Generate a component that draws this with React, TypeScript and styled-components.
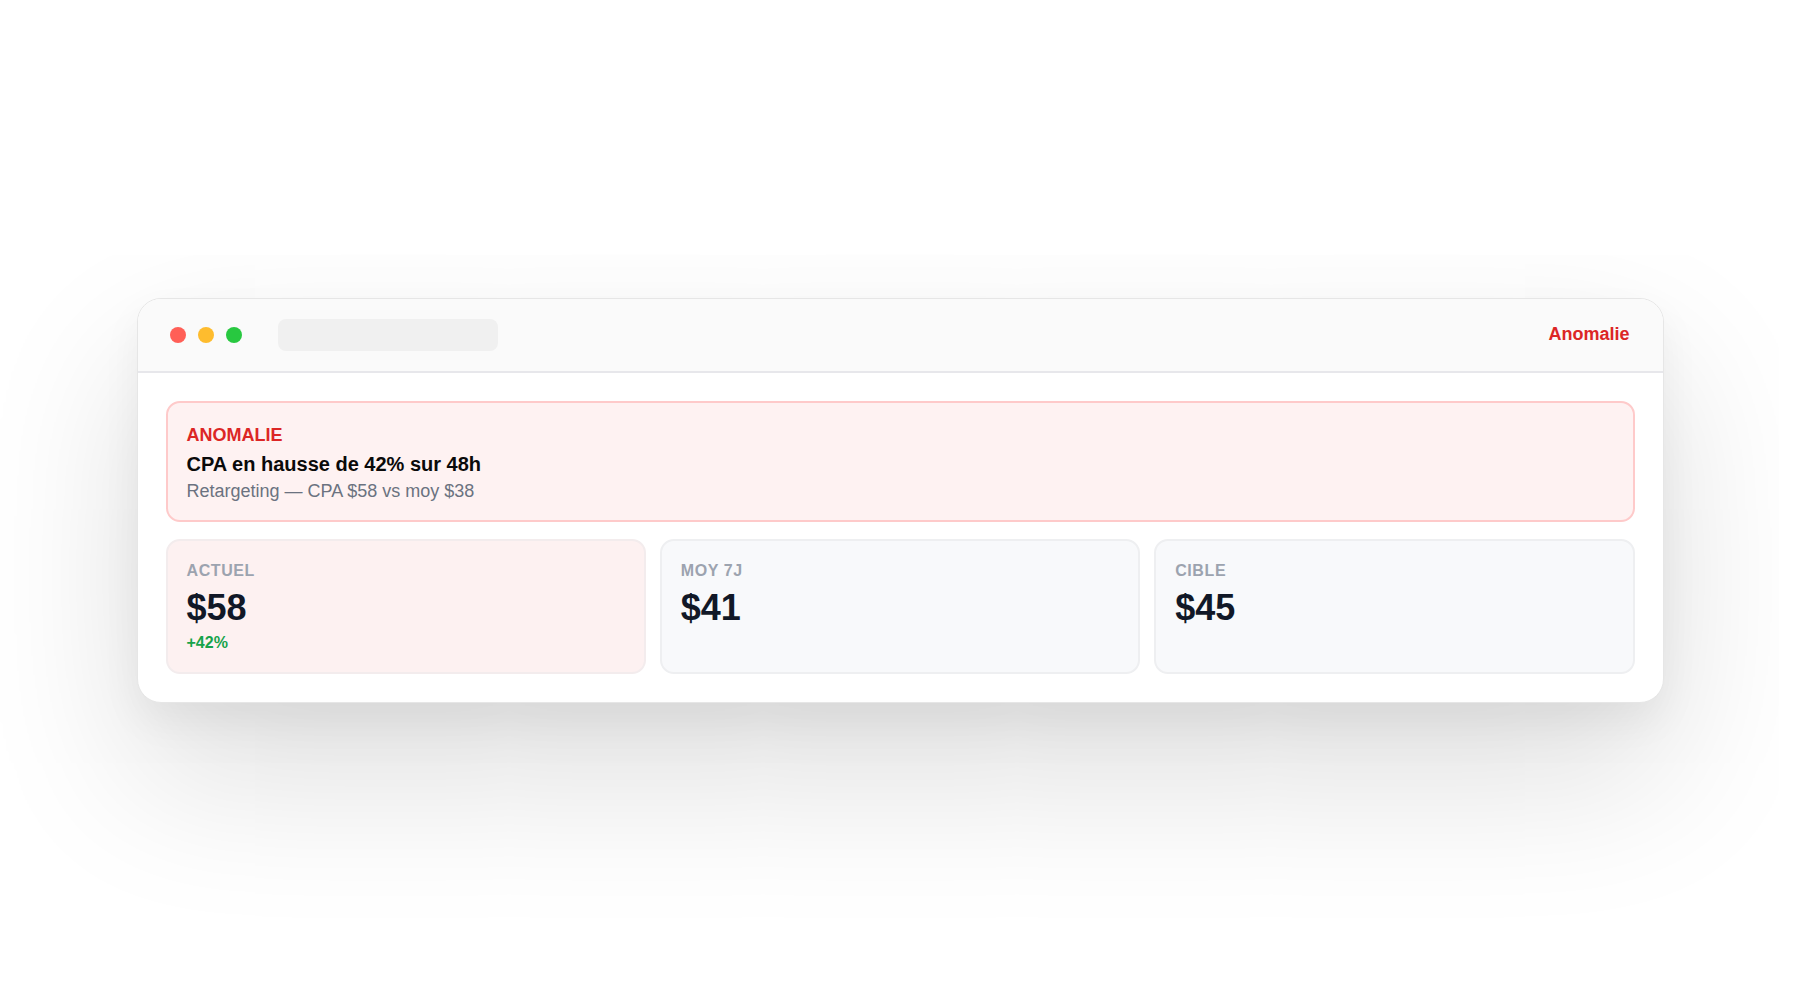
import styled, { createGlobalStyle } from "styled-components";

const GlobalStyle = createGlobalStyle`
    * {
        box-sizing: border-box;
    }
    html, body {
        margin: 0;
        padding: 0;
        background: #ffffff;
    }
    body {
        font-family: "Liberation Sans", Arial, Helvetica, sans-serif;
        -webkit-font-smoothing: antialiased;
    }
`;

const Page = styled.div`
    width: 100%;
    min-height: 100vh;
    display: flex;
    align-items: center;
    justify-content: center;
    background: #ffffff;
`;

const Window = styled.div`
    width: 1527px;
    background: #ffffff;
    border: 1px solid #e6e6e6;
    border-radius: 24px;
    overflow: hidden;
    box-shadow: 0 70px 160px rgba(0, 0, 0, 0.14), 0 18px 40px rgba(0, 0, 0, 0.05);
`;

// Title bar with traffic lights and fake address field
const TitleBar = styled.div`
    height: 74px;
    display: flex;
    align-items: center;
    padding: 0 33px 0 32px;
    background: #fafafa;
    border-bottom: 2px solid #e7e7eb;
`;

const Lights = styled.div`
    display: flex;
    gap: 12px;
`;

const Light = styled.span<{ $color: string }>`
    width: 16px;
    height: 16px;
    border-radius: 50%;
    background: ${(p) => p.$color};
`;

const AddressBar = styled.div`
    width: 220px;
    height: 32px;
    margin-left: 36px;
    border-radius: 8px;
    background: #f0f0f0;
`;

const Status = styled.span`
    margin-left: auto;
    font-size: 18px;
    font-weight: 700;
    color: #dc2626;
`;

const Body = styled.div`
    display: flex;
    flex-direction: column;
    gap: 17px;
    padding: 28px;
`;

const Alert = styled.div`
    display: flex;
    flex-direction: column;
    padding: 20px 19px 18px;
    background: #fef2f2;
    border: 2px solid #fecaca;
    border-radius: 14px;
`;

const AlertLabel = styled.div`
    font-size: 18px;
    line-height: 24px;
    font-weight: 700;
    color: #dc2626;
`;

const AlertTitle = styled.div`
    margin-top: 5px;
    font-size: 20px;
    line-height: 24px;
    font-weight: 700;
    color: #0a0a0a;
`;

const AlertText = styled.div`
    margin-top: 4px;
    font-size: 18px;
    line-height: 22px;
    color: #6b7280;
`;

const Metrics = styled.div`
    display: grid;
    grid-template-columns: repeat(3, 1fr);
    gap: 14px;
`;

const MetricCard = styled.div<{ $alert?: boolean }>`
    display: flex;
    flex-direction: column;
    padding: 20px 19px 19px;
    border-radius: 14px;
    border: 2px solid ${(p) => (p.$alert ? "#f3eced" : "#eeeff1")};
    background: ${(p) => (p.$alert ? "#fdf1f1" : "#f8f9fb")};
`;

const MetricLabel = styled.div`
    font-size: 16px;
    line-height: 20px;
    font-weight: 700;
    letter-spacing: 0.6px;
    color: #9ca3af;
`;

const MetricValue = styled.div`
    margin-top: 5px;
    font-size: 36px;
    line-height: 44px;
    font-weight: 700;
    color: #111827;
`;

const MetricDelta = styled.div`
    margin-top: 3px;
    font-size: 16px;
    line-height: 20px;
    font-weight: 700;
    color: #16a34a;
`;

const metrics = [
    { label: "ACTUEL", value: "$58", delta: "+42%", alert: true },
    { label: "MOY 7J", value: "$41" },
    { label: "CIBLE", value: "$45" },
];

export default function App() {
    return (
        <>
            <GlobalStyle />
            <Page>
                <Window>
                    <TitleBar>
                        <Lights>
                            <Light $color="#ff5f57" />
                            <Light $color="#febc2e" />
                            <Light $color="#28c840" />
                        </Lights>
                        <AddressBar />
                        <Status>Anomalie</Status>
                    </TitleBar>

                    <Body>
                        <Alert>
                            <AlertLabel>ANOMALIE</AlertLabel>
                            <AlertTitle>CPA en hausse de 42% sur 48h</AlertTitle>
                            <AlertText>Retargeting — CPA $58 vs moy $38</AlertText>
                        </Alert>

                        <Metrics>
                            {metrics.map((m) => (
                                <MetricCard key={m.label} $alert={m.alert}>
                                    <MetricLabel>{m.label}</MetricLabel>
                                    <MetricValue>{m.value}</MetricValue>
                                    {m.delta && <MetricDelta>{m.delta}</MetricDelta>}
                                </MetricCard>
                            ))}
                        </Metrics>
                    </Body>
                </Window>
            </Page>
        </>
    );
}
